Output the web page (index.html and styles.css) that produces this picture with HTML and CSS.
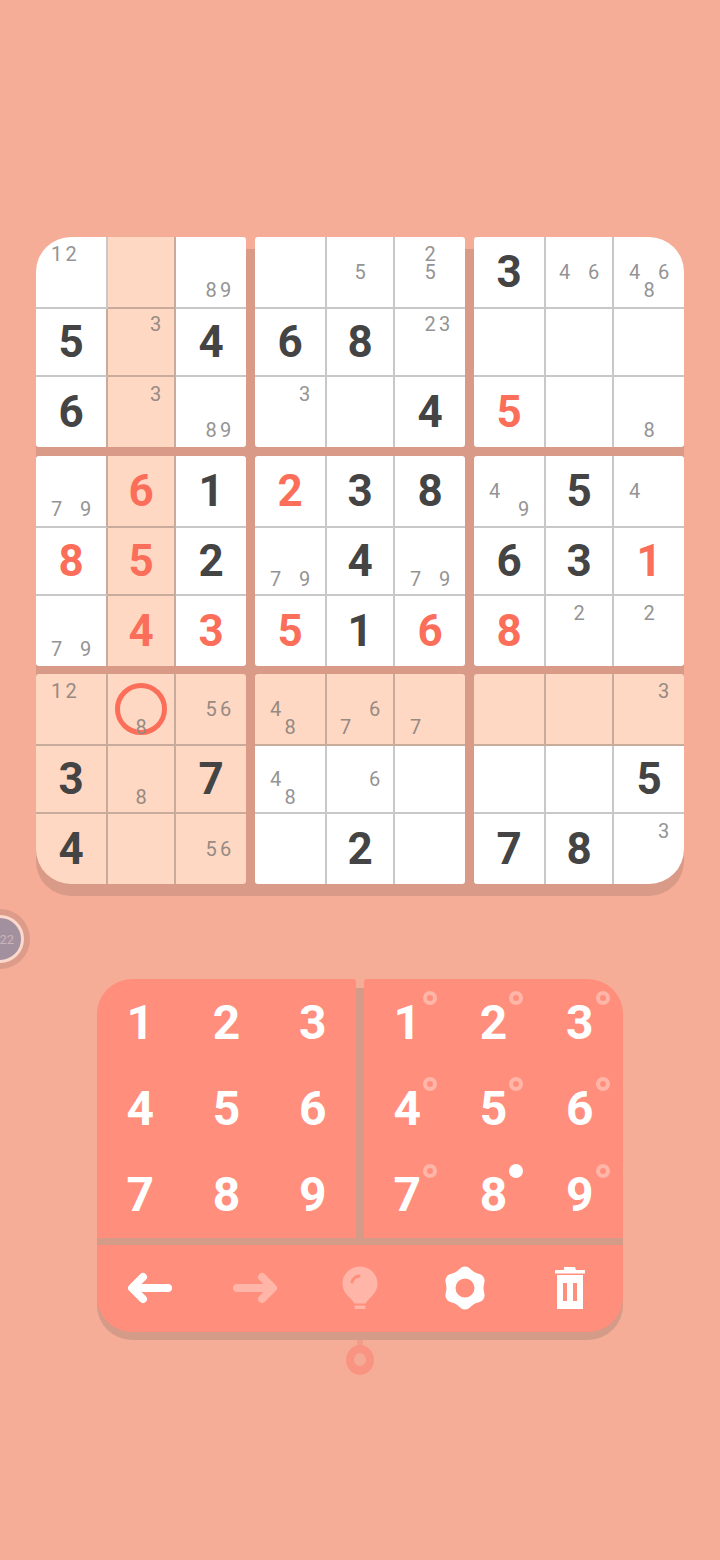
FILE: index.html
```html
<!DOCTYPE html>
<html lang="en">
<head>
    <meta charset="UTF-8">
    <meta name="viewport" content="width=device-width, initial-scale=1.0">
    <title>Sudoku</title>
    <link rel="stylesheet" href="styles.css">
</head>
<body>
    <div class="avatar"><span class="avatar-text">22</span></div>

    <div class="board">
        <div class="box corner-tl">
            <div class="cell notes"><span class="n1">1</span><span class="n2">2</span></div>
            <div class="cell hl"></div>
            <div class="cell notes"><span class="n8">8</span><span class="n9">9</span></div>
            <div class="cell before-hl"><span class="num">5</span></div>
            <div class="cell hl notes"><span class="n3">3</span></div>
            <div class="cell"><span class="num">4</span></div>
            <div class="cell before-hl"><span class="num">6</span></div>
            <div class="cell hl notes"><span class="n3">3</span></div>
            <div class="cell notes"><span class="n8">8</span><span class="n9">9</span></div>
        </div>
        <div class="box">
            <div class="cell"></div>
            <div class="cell notes"><span class="n5">5</span></div>
            <div class="cell notes"><span class="n2">2</span><span class="n5">5</span></div>
            <div class="cell"><span class="num">6</span></div>
            <div class="cell"><span class="num">8</span></div>
            <div class="cell notes"><span class="n2">2</span><span class="n3">3</span></div>
            <div class="cell notes"><span class="n3">3</span></div>
            <div class="cell"></div>
            <div class="cell"><span class="num">4</span></div>
        </div>
        <div class="box corner-tr">
            <div class="cell"><span class="num">3</span></div>
            <div class="cell notes"><span class="n4">4</span><span class="n6">6</span></div>
            <div class="cell notes"><span class="n4">4</span><span class="n6">6</span><span class="n8">8</span></div>
            <div class="cell"></div>
            <div class="cell"></div>
            <div class="cell"></div>
            <div class="cell"><span class="num red">5</span></div>
            <div class="cell"></div>
            <div class="cell notes"><span class="n8">8</span></div>
        </div>

        <div class="box">
            <div class="cell notes before-hl"><span class="n7">7</span><span class="n9">9</span></div>
            <div class="cell hl"><span class="num red">6</span></div>
            <div class="cell"><span class="num">1</span></div>
            <div class="cell before-hl"><span class="num red">8</span></div>
            <div class="cell hl"><span class="num red">5</span></div>
            <div class="cell"><span class="num">2</span></div>
            <div class="cell notes before-hl"><span class="n7">7</span><span class="n9">9</span></div>
            <div class="cell hl"><span class="num red">4</span></div>
            <div class="cell"><span class="num red">3</span></div>
        </div>
        <div class="box">
            <div class="cell"><span class="num red">2</span></div>
            <div class="cell"><span class="num">3</span></div>
            <div class="cell"><span class="num">8</span></div>
            <div class="cell notes"><span class="n7">7</span><span class="n9">9</span></div>
            <div class="cell"><span class="num">4</span></div>
            <div class="cell notes"><span class="n7">7</span><span class="n9">9</span></div>
            <div class="cell"><span class="num red">5</span></div>
            <div class="cell"><span class="num">1</span></div>
            <div class="cell"><span class="num red">6</span></div>
        </div>
        <div class="box">
            <div class="cell notes"><span class="n4">4</span><span class="n9">9</span></div>
            <div class="cell"><span class="num">5</span></div>
            <div class="cell notes"><span class="n4">4</span></div>
            <div class="cell"><span class="num">6</span></div>
            <div class="cell"><span class="num">3</span></div>
            <div class="cell"><span class="num red">1</span></div>
            <div class="cell"><span class="num red">8</span></div>
            <div class="cell notes"><span class="n2">2</span></div>
            <div class="cell notes"><span class="n2">2</span></div>
        </div>

        <div class="box corner-bl">
            <div class="cell hl notes"><span class="n1">1</span><span class="n2">2</span></div>
            <div class="cell hl notes selected"><span class="ring"></span><span class="n8">8</span></div>
            <div class="cell hl notes"><span class="n5">5</span><span class="n6">6</span></div>
            <div class="cell hl"><span class="num">3</span></div>
            <div class="cell hl notes"><span class="n8">8</span></div>
            <div class="cell hl"><span class="num">7</span></div>
            <div class="cell hl"><span class="num">4</span></div>
            <div class="cell hl"></div>
            <div class="cell hl notes"><span class="n5">5</span><span class="n6">6</span></div>
        </div>
        <div class="box">
            <div class="cell hl notes"><span class="n4">4</span><span class="n8">8</span></div>
            <div class="cell hl notes"><span class="n6">6</span><span class="n7">7</span></div>
            <div class="cell hl notes"><span class="n7">7</span></div>
            <div class="cell notes"><span class="n4">4</span><span class="n8">8</span></div>
            <div class="cell notes"><span class="n6">6</span></div>
            <div class="cell"></div>
            <div class="cell"></div>
            <div class="cell"><span class="num">2</span></div>
            <div class="cell"></div>
        </div>
        <div class="box corner-br">
            <div class="cell hl"></div>
            <div class="cell hl"></div>
            <div class="cell hl notes"><span class="n3">3</span></div>
            <div class="cell"></div>
            <div class="cell"></div>
            <div class="cell"><span class="num">5</span></div>
            <div class="cell"><span class="num">7</span></div>
            <div class="cell"><span class="num">8</span></div>
            <div class="cell notes"><span class="n3">3</span></div>
        </div>
    </div>

    <div class="pad">
        <div class="keys keys-left">
            <button class="key">1</button>
            <button class="key">2</button>
            <button class="key">3</button>
            <button class="key">4</button>
            <button class="key">5</button>
            <button class="key">6</button>
            <button class="key">7</button>
            <button class="key">8</button>
            <button class="key">9</button>
        </div>
        <div class="keys keys-right">
            <button class="key">1<span class="dot"></span></button>
            <button class="key">2<span class="dot"></span></button>
            <button class="key">3<span class="dot"></span></button>
            <button class="key">4<span class="dot"></span></button>
            <button class="key">5<span class="dot"></span></button>
            <button class="key">6<span class="dot"></span></button>
            <button class="key">7<span class="dot"></span></button>
            <button class="key">8<span class="dot on"></span></button>
            <button class="key">9<span class="dot"></span></button>
        </div>
        <div class="tools">
            <button class="tool">
                <svg width="48" height="34" viewBox="0 0 48 34" fill="none" stroke="#fff" stroke-width="8" stroke-linecap="round" stroke-linejoin="round">
                    <path d="M42 17H7M17 6L6 17L17 28"/>
                </svg>
            </button>
            <button class="tool">
                <svg width="48" height="34" viewBox="0 0 48 34" fill="none" stroke="#ffb6a8" stroke-width="8" stroke-linecap="round" stroke-linejoin="round">
                    <path d="M6 17H41M31 6L42 17L31 28"/>
                </svg>
            </button>
            <button class="tool">
                <svg width="36" height="44" viewBox="0 0 36 44">
                    <path fill="#ffb6a8" d="M18 0.5C8.5 0.5 0.5 8 0.5 17.5C0.5 24 4 28 7.5 31.5C10 34 11.5 35.500 12 37.5H24C24.5 35.500 26 34 28.500 31.5C32 28 35.5 24 35.5 17.5C35.5 8 27.5 0.5 18 0.5Z"/>
                    <path fill="none" stroke="#ff8e7c" stroke-width="3" stroke-linecap="round" d="M10 16C10.5 13.5 13 11 17 10"/>
                    <rect x="12.5" y="39.5" width="11" height="3.5" rx="1" fill="#ffb6a8"/>
                </svg>
            </button>
            <button class="tool">
                <svg width="44" height="44" viewBox="-22 -22 44 44">
                    <path fill="#fff" fill-rule="evenodd" d="M0 -21.5C4.5 -21.5 5.35 -18.27 9.25 -16.02C13.15 -13.77 16.37 -14.65 18.62 -10.75C20.87 -6.85 18.5 -4.5 18.5 0C18.5 4.5 20.87 6.85 18.62 10.75C16.37 14.65 13.15 13.77 9.25 16.02C5.35 18.27 4.5 21.5 0 21.5C-4.5 21.5 -5.35 18.27 -9.25 16.02C-13.15 13.77 -16.37 14.65 -18.62 10.75C-20.87 6.85 -18.5 4.5 -18.5 0C-18.5 -4.5 -20.87 -6.85 -18.62 -10.75C-16.37 -14.65 -13.15 -13.77 -9.25 -16.02C-5.35 -18.27 -4.5 -21.5 0 -21.5ZM0 -9.5A9.5 9.5 0 1 0 0 9.5A9.5 9.5 0 1 0 0 -9.5Z"/>
                </svg>
            </button>
            <button class="tool">
                <svg width="30" height="42" viewBox="0 0 30 42" fill="#fff">
                    <path d="M9 0H20L21 3H30V6.5H0V3H9Z"/>
                    <path fill-rule="evenodd" d="M2 8H28V42H2ZM8 16V34H12V16ZM18 16V34H22V16Z"/>
                </svg>
            </button>
        </div>
    </div>

    <div class="stem"></div>
    <div class="page-dot"></div>
</body>
</html>
```

FILE: styles.css
```css
* {
    box-sizing: border-box;
}
html, body {
    margin: 0;
    height: 1560px;
    overflow: hidden;
}
body {
    position: relative;
    padding-top: 237px;
    background-color: #f6ad97;
    font-family: "Roboto", sans-serif;
}

/* board */
.board {
    position: relative;
    display: grid;
    grid-template-columns: repeat(3, 210px);
    grid-auto-rows: 210px;
    column-gap: 9px;
    row-gap: 8.5px;
    width: 648px;
    margin-left: 36px;
}
.board::before {
    content: "";
    position: absolute;
    top: 12px;
    bottom: -12px;
    left: 0;
    right: 0;
    background-color: #d99a87;
    border-radius: 35px;
}
.box {
    position: relative;
    display: grid;
    grid-template-columns: 72px 68px 70px;
    grid-template-rows: 72px 68px 70px;
    border-radius: 3px;
    overflow: hidden;
}
.corner-tl { border-top-left-radius: 35px; }
.corner-tr { border-top-right-radius: 35px; }
.corner-bl { border-bottom-left-radius: 35px; }
.corner-br { border-bottom-right-radius: 35px; }

.cell {
    position: relative;
    display: flex;
    align-items: center;
    justify-content: center;
    background-color: #fff;
    border-right: 2px solid #c8c8c8;
    border-bottom: 2px solid #c8c8c8;
}
.cell:nth-child(3n) {
    border-right: none;
}
.cell:nth-child(n+7) {
    border-bottom: none;
}
.hl {
    background-color: #ffd8c4;
    border-color: #c9ab9c;
}
.before-hl {
    border-right-color: #c9ab9c;
}

.num {
    font-size: 44px;
    font-weight: 700;
    line-height: 1;
    color: #444;
}
.num.red {
    color: #fb6f5a;
}

/* pencil marks sit on a 3x3 grid inside the cell */
.notes {
    display: grid;
    grid-template-columns: repeat(3, 14.5px);
    grid-template-rows: repeat(3, 18px);
    align-content: center;
    justify-content: center;
    font-size: 20px;
    line-height: 18px;
    text-align: center;
    color: #949494;
}
.hl.notes {
    color: #968a82;
}
.n1 { grid-area: 1 / 1; }
.n2 { grid-area: 1 / 2; }
.n3 { grid-area: 1 / 3; }
.n4 { grid-area: 2 / 1; }
.n5 { grid-area: 2 / 2; }
.n6 { grid-area: 2 / 3; }
.n7 { grid-area: 3 / 1; }
.n8 { grid-area: 3 / 2; }
.n9 { grid-area: 3 / 3; }

.ring {
    position: absolute;
    top: 8.5px;
    left: 7px;
    width: 52px;
    height: 52px;
    border: 5px solid #fb6f5a;
    border-radius: 50%;
}
.selected .n8 {
    position: relative;
}

/* number pad */
.pad {
    position: relative;
    display: grid;
    grid-template-columns: 259px 259px;
    column-gap: 8px;
    row-gap: 7px;
    width: 526px;
    margin-top: 95px;
    margin-left: 97px;
}
.pad::before {
    content: "";
    position: absolute;
    top: 9px;
    bottom: -8px;
    left: 0;
    right: 0;
    background-color: #d49b88;
    border-radius: 35px;
}
.keys {
    position: relative;
    display: grid;
    grid-template-columns: repeat(3, 1fr);
    grid-auto-rows: 86.33px;
    background-color: #ff8e7c;
}
.keys-left {
    border-radius: 35px 3px 0 0;
}
.keys-right {
    border-radius: 3px 35px 0 0;
}
.key {
    position: relative;
    padding: 0;
    border: none;
    background: none;
    font-family: inherit;
    font-size: 48px;
    font-weight: 700;
    color: #fff;
}
.dot {
    position: absolute;
    top: 12px;
    left: 59px;
    width: 14px;
    height: 14px;
    border: 4.5px solid #ffb6a8;
    border-radius: 50%;
}
.dot.on {
    background-color: #fff;
    border-color: #fff;
}
.tools {
    position: relative;
    grid-column: 1 / 3;
    display: grid;
    grid-template-columns: repeat(5, 1fr);
    height: 87px;
    background-color: #ff8e7c;
    border-radius: 0 0 35px 35px;
}
.tool {
    display: flex;
    align-items: center;
    justify-content: center;
    padding: 0;
    border: none;
    background: none;
}

/* little marker under the pad */
.stem {
    width: 6px;
    height: 6px;
    margin: 8px auto 0;
    background-color: #f29c8a;
}
.page-dot {
    width: 28px;
    height: 30px;
    margin: -1px auto 0;
    border: 8px solid #fa9482;
    border-bottom-width: 9px;
    border-radius: 50%;
    background-color: #f4aa96;
}

/* floating level badge, cut off by the screen edge */
.avatar {
    position: absolute;
    top: 915px;
    left: -24px;
    display: flex;
    align-items: center;
    justify-content: flex-end;
    width: 48px;
    height: 48px;
    padding-right: 7px;
    background-color: #a3909e;
    border: 3.5px solid #fbd9cc;
    border-radius: 50%;
    box-shadow: 0 0 0 6px #dc9c89;
    font-size: 13px;
    color: #c9b4b8;
}
```
